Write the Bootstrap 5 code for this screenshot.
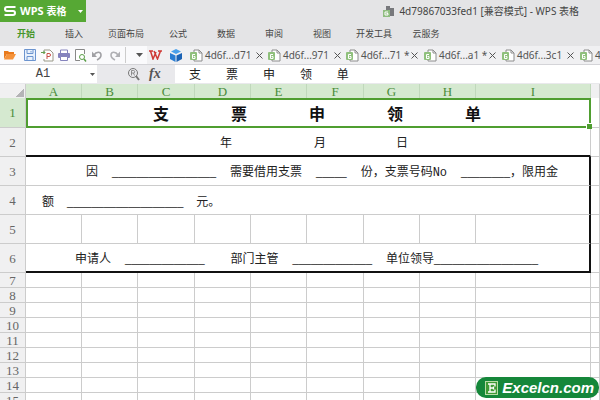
<!DOCTYPE html>
<html lang="zh-CN">
<head>
<meta charset="utf-8">
<meta name="viewport" content="width=device-width, initial-scale=1">
<title>WPS 表格</title>
<link href="https://cdn.jsdelivr.net/npm/bootstrap@5.3.0/dist/css/bootstrap.min.css" rel="stylesheet">
<style>
body{font-family:"Noto Sans","Noto Sans CJK SC",sans-serif;font-size:10px;line-height:14px;color:#444;background:#fff}
svg{display:block;flex:none}
button{border:0;background:none;padding:0;color:inherit;font:inherit}
.titlebar{height:22px;background:#e4e4e6}
.brand{width:86px;padding:0 3px 0 4px;background:#56a834;color:#fff;font-size:11px;font-weight:700}
.brand .zh{font-size:10px}
.doc-title{margin-right:21px}
.ribbon{height:24px;padding-left:2px;background:#e4e4e6;font-size:9px}
.ribbon a{width:48px;color:#444;text-align:center;text-decoration:none}
.ribbon a.wide{width:56px}
.ribbon a.current{color:#45962a;font-weight:700}
.tools{height:19px;background:#f0f0f2;border-bottom:1px solid #d4d4d8}
.quick{width:147px;padding-left:3px;background:#fafafc}
.quick button{width:14px;margin-right:3px}
.quick .divider{width:1px;height:16px;margin:0 10px 0 3px;background:#ccc}
.apps{width:42px;padding-left:2px;gap:8px}
.filetab{width:78px;gap:2px;padding-left:1px;color:#555;white-space:nowrap}
.filetab .close-x{margin-left:3px}
.formula{height:18px;background:#e9e9ec}
.formula input{border:0;padding:0;background:#fff;min-width:0}
.namebox{width:97px;background:#fff}
.namebox input{width:86px;text-align:center;font:12px "Liberation Mono",monospace;color:#444}
.fx{width:78px;padding-left:31px;gap:9px;font:italic 14px "Liberation Serif",serif;color:#555}
.formula .entry{padding-left:14px;font:12px "Noto Sans","Noto Sans CJK SC",sans-serif;color:#222}
.sheet-area{padding-top:1px;background:#e9e9ec}
.sheet{table-layout:fixed;width:100%;border-collapse:separate;border-spacing:0;background:#fff;color:#222;font-size:12px}
.sheet th,.sheet td{padding:0;border:solid #ccc;border-width:0 1px 1px 0;vertical-align:middle}
.sheet th{padding-top:1px;font:13px/12px "Liberation Serif",serif;text-align:center;color:#666;background:#f0f0f1}
.sheet thead th{height:14px;border-bottom:0;border-color:#c0d8bb;background:#d5e9d0;color:#4a8c3a}
.sheet thead th.plain{background:#f0f0f1;border-color:#ccc}
.sheet tbody tr{height:15px}
.sheet tbody tr.tall{height:29px}
.sheet tbody tr.head-row{height:30px}
.sheet tr.head-row th{background:#d5e9d0;color:#4a8c3a}
.sheet td.selected{position:relative;border:2px solid #4f9e30}
.handle{right:-3px;bottom:-3px;width:6px;height:6px;background:#4f9e30;border:solid #fff;border-width:1px 0 0 1px}
.sheet td.edge-bottom{border-bottom:2px solid #111}
.sheet td.edge-right{border-right:2px solid #111}
.form-title{padding:3px 0 0 17px;font:700 16px/20px "Liberation Serif","Noto Sans CJK SC",serif;color:#111}
.form-title span{width:78px;text-align:center}
.date-line{padding-left:194px}
.date-line .year{width:94px}
.date-line .month{width:82px}
.line{padding-top:3px;white-space:nowrap;line-height:18px}
.blank{font-family:"Liberation Sans",sans-serif;font-size:11px}
.latin{font-family:"Liberation Mono",monospace}
.l3{padding-left:60px;gap:14px}
.l4{padding-left:16px;gap:13px}
.l6{padding-left:49px;gap:14px}
.l6 .dept{padding-left:12px}
.corner{width:8px;height:8px;margin:2px 1px 0 auto;background:linear-gradient(135deg,transparent 50%,#b4b4b6 50%)}
.sitemark{right:1px;bottom:2px;height:21px;padding:0 5px 0 9px;gap:4px;border-radius:10px;background:#15873a;color:#fff;font:italic 700 15px/20px "Liberation Sans",sans-serif;text-decoration:none}
.sitemark:hover{color:#fff}
</style>
<script src="https://cdn.jsdelivr.net/npm/bootstrap@5.3.0/dist/js/bootstrap.bundle.min.js"></script>
</head>
<body class="vh-100 overflow-hidden position-relative d-flex flex-column">
<svg width="0" height="0" class="position-absolute" aria-hidden="true">
  <symbol id="sheet-icon" viewBox="0 0 13 13"><path d="M4 1h5l3 3v8H4z" fill="#fff" stroke="#8c8c8c"/><path d="M9 1v3h3" fill="none" stroke="#8c8c8c"/><rect x="0" y="3" width="7" height="8" rx="1" fill="#8fc07c"/><path d="M5 5.500H2.500v4H5v-2H3.500" fill="none" stroke="#fff"/></symbol>
</svg>
<header>
  <div class="titlebar d-flex align-items-center justify-content-between">
    <button class="brand h-100 d-flex align-items-center">
      <svg width="12" height="10" viewBox="0 0 12 10"><path d="M11.500 1H3Q1 1 1 3t2 2h6q2 0 2 2T9 9H.500" fill="none" stroke="#fff" stroke-width="2"/></svg>
      <span class="ms-1">WPS <span class="zh">表格</span></span>
      <svg class="ms-auto" width="5" height="3"><path d="M0 0h5L2.500 3z" fill="#fff"/></svg>
    </button>
    <div class="doc-title d-flex align-items-center gap-1">
      <svg width="13" height="13" viewBox="0 0 13 13"><path d="M4 1h4v4H4zM7 3h5v8H7z" fill="#77787c"/><rect x="1" y="5" width="7" height="7" fill="#8fbd80"/><path d="M6 7H3v3h3V8.500H4.500" fill="none" stroke="#fff"/></svg>
      <span>4d79867033fed1 [兼容模式] - WPS 表格</span>
    </div>
  </div>
  <nav class="ribbon d-flex align-items-center">
    <a href="#" class="current">开始</a><a href="#">插入</a><a href="#" class="wide">页面布局</a><a href="#">公式</a><a href="#">数据</a><a href="#">审阅</a><a href="#">视图</a><a href="#" class="wide">开发工具</a><a href="#">云服务</a>
  </nav>
  <div class="tools d-flex overflow-hidden">
    <div class="quick d-flex align-items-center flex-shrink-0">
      <button aria-label="打开"><svg width="13" height="12" viewBox="0 0 13 12"><path d="M1 10V2h4l1 1h5v2H4z" fill="#e8791c"/><path d="M1 10.500 4 5h9l-3 5.500z" fill="#f5923a"/></svg></button>
      <button aria-label="保存" class="ps-1"><svg width="12" height="12" viewBox="0 0 12 12"><path d="M.500.500h11v11H.500z" fill="#e9f1fc" stroke="#6c94cf"/><path d="M3 .500v4h6v-4M3 11.500v-4h6v4M7 2v1.500" fill="none" stroke="#6c94cf"/></svg></button>
      <button aria-label="输出PDF" class="ps-1"><svg width="13" height="13" viewBox="0 0 13 13"><path d="M3 5V1h6l3 3v8H3v-2" fill="#fff" stroke="#998" /><path d="M6 10V4.500h2a1.500 1.500 0 0 1 0 3H6" fill="none" stroke="#c9504a"/><path d="M0 3.500h4M2.500 2 4 3.500 2.500 5" fill="none" stroke="#63a04f"/></svg></button>
      <button aria-label="打印" class="ps-1"><svg width="12" height="12" viewBox="0 0 12 12"><path d="M2.500 4V1h7v3" fill="#fff" stroke="#8583bd"/><rect y="4" width="12" height="5" rx="1" fill="#8583bd"/><path d="M2.500 7.500h7v4h-7z" fill="#fff" stroke="#8583bd"/></svg></button>
      <button aria-label="打印预览" class="ps-1"><svg width="12" height="13" viewBox="0 0 12 13"><path d="M5 11.500H.500v-11h9V5" fill="#fff" stroke="#888"/><circle cx="7" cy="8" r="2.500" fill="#fff" stroke="#5a9e48"/><path d="m9 10 2 2.500" stroke="#5a9e48" stroke-width="1.500"/></svg></button>
      <button aria-label="撤销" class="ps-1"><svg width="11" height="11" viewBox="0 0 11 11"><path d="M2 5C4 1.500 9 1 9 5q0 3-4 5" fill="none" stroke="#a0a0a4" stroke-width="1.600"/><path d="M0 1.500V7h5z" fill="#a0a0a4"/></svg></button>
      <button aria-label="恢复" class="ps-1"><svg width="11" height="11" viewBox="0 0 11 11"><path d="M9 5C7 1.500 2 1 2 5q0 3 4 5" fill="none" stroke="#b0b0b4" stroke-width="1.600"/><path d="M11 1.500V7H6z" fill="#b0b0b4"/></svg></button>
      <span class="divider"></span>
      <svg width="7" height="4"><path d="M0 0h7L3.500 4z" fill="#555"/></svg>
    </div>
    <div class="apps d-flex align-items-center flex-shrink-0">
      <svg width="13" height="10" viewBox="0 0 13 10"><path d="M0 1h4M1.500 1l2.500 8 3-7M5 1l3.500 8 3-8M9 1h4" fill="none" stroke="#cf3a36" stroke-width="1.500"/></svg>
      <svg width="12" height="13" viewBox="0 0 12 13"><path d="m6 0 5 2.500L6 5 1 2.500z" fill="#4aa0ea"/><path d="M0 4l5.500 2.500V13L0 10z" fill="#2a7dd2"/><path d="m12 4-5.500 2.500V13l5.500-3z" fill="#1b63b5"/></svg>
    </div>
    <div class="filetab d-flex align-items-center flex-shrink-0"><svg width="13" height="13"><use href="#sheet-icon"/></svg><span>4d6f...d71</span><button class="close-x" aria-label="关闭"><svg width="7" height="7"><path d="m.500.500 6 6m0-6-6 6" stroke="#555"/></svg></button></div>
    <div class="filetab d-flex align-items-center flex-shrink-0"><svg width="13" height="13"><use href="#sheet-icon"/></svg><span>4d6f...971</span><button class="close-x" aria-label="关闭"><svg width="7" height="7"><path d="m.500.500 6 6m0-6-6 6" stroke="#555"/></svg></button></div>
    <div class="filetab d-flex align-items-center flex-shrink-0"><svg width="13" height="13"><use href="#sheet-icon"/></svg><span>4d6f...71 *</span><button aria-label="关闭"><svg width="7" height="7"><path d="m.500.500 6 6m0-6-6 6" stroke="#555"/></svg></button></div>
    <div class="filetab d-flex align-items-center flex-shrink-0"><svg width="13" height="13"><use href="#sheet-icon"/></svg><span>4d6f...a1 *</span><button aria-label="关闭"><svg width="7" height="7"><path d="m.500.500 6 6m0-6-6 6" stroke="#555"/></svg></button></div>
    <div class="filetab d-flex align-items-center flex-shrink-0"><svg width="13" height="13"><use href="#sheet-icon"/></svg><span>4d6f...3c1</span><button class="close-x" aria-label="关闭"><svg width="7" height="7"><path d="m.500.500 6 6m0-6-6 6" stroke="#555"/></svg></button></div>
    <div class="filetab d-flex align-items-center flex-shrink-0"><svg width="13" height="13"><use href="#sheet-icon"/></svg><span>4</span></div>
  </div>
  <div class="formula d-flex">
    <div class="namebox d-flex align-items-center flex-shrink-0"><input aria-label="名称框" value="A1"><svg class="ms-1" width="5" height="3"><path d="M0 0h5L2.500 3z" fill="#555"/></svg></div>
    <div class="fx d-flex align-items-center flex-shrink-0">
      <svg width="12" height="13" viewBox="0 0 12 13"><circle cx="5" cy="5" r="4.500" fill="none" stroke="#777"/><path d="M3.500 7.500v-5h2a1 1 0 0 1 0 2.500h-2m2 0 1 2.500" fill="none" stroke="#777" stroke-width=".800"/><path d="m8 8 3 4" stroke="#777" stroke-width="2"/></svg>
      <button class="fw-bold fst-italic" aria-label="插入函数">fx</button>
    </div>
    <input class="entry flex-grow-1" aria-label="编辑栏" value="支        票        申        领        单">
  </div>
</header>
<main class="sheet-area flex-grow-1 overflow-hidden">
<table class="sheet">
  <colgroup><col style="width:26px"><col style="width:56px"><col style="width:56px"><col style="width:57px"><col style="width:56px"><col style="width:56px"><col style="width:57px"><col style="width:56px"><col style="width:56px"><col style="width:115px"><col></colgroup>
  <thead><tr><th class="plain"><div class="corner"></div></th><th>A</th><th>B</th><th>C</th><th>D</th><th>E</th><th>F</th><th>G</th><th>H</th><th>I</th><th class="plain"></th></tr></thead>
  <tbody>
  <tr class="head-row"><th>1</th><td colspan="9" class="selected"><div class="form-title d-flex justify-content-center"><span>支</span><span>票</span><span>申</span><span>领</span><span>单</span></div><i class="handle position-absolute"></i></td><td></td></tr>
  <tr class="tall"><th>2</th><td colspan="9" class="edge-bottom"><div class="line date-line d-flex"><span class="year">年</span><span class="month">月</span><span>日</span></div></td><td></td></tr>
  <tr class="tall"><th>3</th><td colspan="9" class="edge-right"><div class="line l3 d-flex"><span>因</span><span class="blank">_________________</span><span>需要借用支票</span><span class="blank">_____</span><span>份，支票号码<span class="latin">No</span></span><span><span class="blank">________</span>，限用金</span></div></td><td></td></tr>
  <tr class="tall"><th>4</th><td colspan="9" class="edge-right"><div class="line l4 d-flex"><span>额</span><span class="blank">___________________</span><span>元。</span></div></td><td></td></tr>
  <tr class="tall"><th>5</th><td></td><td></td><td></td><td></td><td></td><td></td><td></td><td></td><td class="edge-right"></td><td></td></tr>
  <tr class="tall"><th>6</th><td colspan="9" class="edge-right edge-bottom"><div class="line l6 d-flex"><span>申请人</span><span class="blank">_____________</span><span class="dept">部门主管</span><span class="blank">_____________</span><span>单位领导<span class="blank">_________________</span></span></div></td><td></td></tr>
  <tr><th>7</th><td></td><td></td><td></td><td></td><td></td><td></td><td></td><td></td><td></td><td></td></tr>
  <tr><th>8</th><td></td><td></td><td></td><td></td><td></td><td></td><td></td><td></td><td></td><td></td></tr>
  <tr><th>9</th><td></td><td></td><td></td><td></td><td></td><td></td><td></td><td></td><td></td><td></td></tr>
  <tr><th>10</th><td></td><td></td><td></td><td></td><td></td><td></td><td></td><td></td><td></td><td></td></tr>
  <tr><th>11</th><td></td><td></td><td></td><td></td><td></td><td></td><td></td><td></td><td></td><td></td></tr>
  <tr><th>12</th><td></td><td></td><td></td><td></td><td></td><td></td><td></td><td></td><td></td><td></td></tr>
  <tr><th>13</th><td></td><td></td><td></td><td></td><td></td><td></td><td></td><td></td><td></td><td></td></tr>
  <tr><th>14</th><td></td><td></td><td></td><td></td><td></td><td></td><td></td><td></td><td></td><td></td></tr>
  <tr><th>15</th><td></td><td></td><td></td><td></td><td></td><td></td><td></td><td></td><td></td><td></td></tr>
  </tbody>
</table>
</main>
<a href="#" class="sitemark position-absolute d-flex align-items-center">
  <svg width="13" height="14" viewBox="0 0 13 14"><rect x=".500" y=".500" width="12" height="13" fill="#3f9a35" stroke="#b9dca6"/><path d="M3 3h7v2.500M3 11h7V8.500M5 3v8M5 7h3.500M8.500 5.500v3" fill="none" stroke="#fff" stroke-width="1.300"/></svg>
  <span>Excelcn.com</span>
</a>
</body>
</html>
